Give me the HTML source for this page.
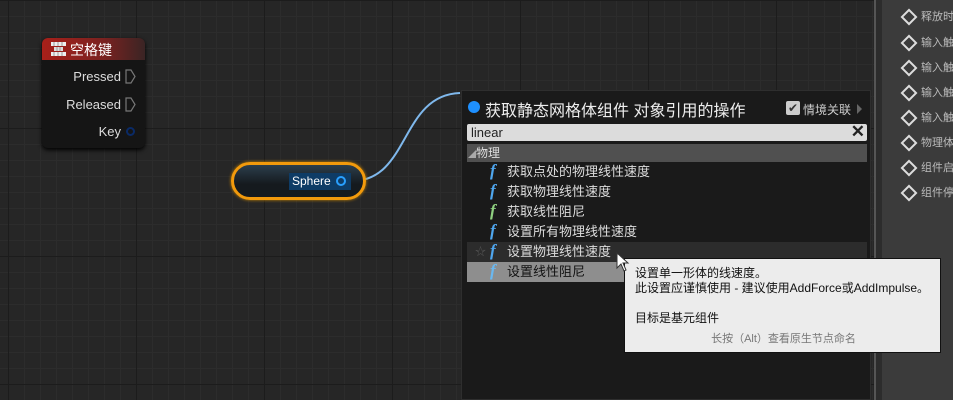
<!DOCTYPE html>
<html><head><meta charset="utf-8"><style>
*{margin:0;padding:0;box-sizing:border-box}
body{width:953px;height:400px;overflow:hidden;position:relative;background:#262626;font-family:"Liberation Sans","Noto Sans CJK SC",sans-serif;}
.grid{position:absolute;left:0;top:0;width:874px;height:400px;background-color:#262626;
background-image:linear-gradient(#1c1c1c 1px,transparent 1px),linear-gradient(90deg,#1c1c1c 1px,transparent 1px),linear-gradient(#2c2c2c 1px,transparent 1px),linear-gradient(90deg,#2c2c2c 1px,transparent 1px);
background-size:128px 128px,128px 128px,16px 16px,16px 16px;background-position:8px 0,8px 0,8px 0,8px 0}
.abs{position:absolute}
.node{left:42px;top:38px;width:103px;height:110px;background:#151515;border-radius:6px;box-shadow:0 2px 4px #000}
.nh{height:22px;border-radius:6px 6px 0 0;background:linear-gradient(90deg,#a8201a,#7a2220 60%,#3a2424);color:#fff;font-size:14px;padding:2px 0 0 28px;position:relative}
.pin{color:#ddd;font-size:13px;position:absolute;right:24px}
.tri{position:absolute;right:9px}
.menu{left:461px;top:90px;width:410px;height:310px;background:#1a1a1a;border:1px solid #2e2e2e}
.row{position:absolute;left:5px;width:400px;height:20px;color:#ddd;font-size:13px;padding-left:40px;line-height:20px}
.f{position:absolute;left:23px;font-family:"Liberation Serif",serif;font-style:italic;font-weight:bold;font-size:17px;color:#4fa6ee;top:-1px}
.right{left:882px;top:0;width:71px;height:400px;background:#3b3b3b}
.ri{position:absolute;left:20px;color:#bbb;font-size:11px;height:16px}
.ri:before{content:"";position:absolute;left:1px;top:3px;width:8px;height:8px;border:2px solid #ddd;transform:rotate(45deg)}
.ri span{position:absolute;left:19px;top:0;white-space:nowrap}
</style></head><body>
<div class="grid"></div>
<div class="abs" style="left:874px;top:0;width:2px;height:400px;background:#555"></div>
<div class="abs" style="left:876px;top:0;width:6px;height:400px;background:#2c2c2c"></div>
<div class="abs right">
<div class="ri" style="top:8px"><span>释放时</span></div>
<div class="ri" style="top:34px"><span>输入触</span></div>
<div class="ri" style="top:59px"><span>输入触</span></div>
<div class="ri" style="top:84px"><span>输入触</span></div>
<div class="ri" style="top:109px"><span>输入触</span></div>
<div class="ri" style="top:134px"><span>物理体</span></div>
<div class="ri" style="top:159px"><span>组件启</span></div>
<div class="ri" style="top:184px"><span>组件停</span></div>
</div>

<div class="abs node">
<div class="nh"><svg style="position:absolute;left:9px;top:4px" width="15" height="14"><rect x="0" y="0" width="15" height="4" fill="#eee"/><rect x="3" y="5" width="9" height="4" fill="#ddd"/><rect x="0" y="10" width="15" height="4" fill="#eee"/><path d="M3 0v4M7 0v4M11 0v4M6 5v4M9 5v4M3 10v4M7 10v4M11 10v4" stroke="#999" stroke-width="1"/></svg>空格键</div>
<div class="pin" style="top:31px">Pressed</div><svg class="tri" style="top:31px" width="11" height="15"><path d="M1 1H6L10 7.5L6 14H1Z" fill="none" stroke="#777" stroke-width="1.2"/></svg>
<div class="pin" style="top:59px">Released</div><svg class="tri" style="top:59px" width="11" height="15"><path d="M1 1H6L10 7.5L6 14H1Z" fill="none" stroke="#777" stroke-width="1.2"/></svg>
<div class="pin" style="top:86px">Key</div>
<div class="abs" style="right:10px;top:89px;width:9px;height:9px;border:2px solid #0a2a66;border-radius:50%"></div>
</div>

<svg class="abs" style="left:0;top:0" width="953" height="400"><path d="M352 181 C410 181 400 95 460 93" stroke="#7fb8ec" stroke-width="2" fill="none"/></svg>
<div class="abs" style="left:231px;top:162px;width:135px;height:38px;border:3px solid #f29a0c;border-radius:19px;background:linear-gradient(#2c3e4c,#151a1e 60%);box-shadow:0 0 3px #c80"></div>
<div class="abs" style="left:289px;top:173px;width:62px;height:17px;background:#0e3c66"></div>
<div class="abs" style="left:292px;top:174px;color:#fff;font-size:12px">Sphere</div>
<div class="abs" style="left:336px;top:176px;width:10px;height:10px;border:2px solid #29a0ff;border-radius:50%"></div>

<div class="abs menu">
<div class="abs" style="left:6px;top:10px;width:12px;height:12px;border-radius:50%;background:#1e90ff"></div>
<div class="abs" style="left:23px;top:6px;color:#eee;font-size:16px">获取静态网格体组件 对象引用的操作</div>
<div class="abs" style="left:324px;top:10px;width:14px;height:14px;background:#ccc;border-radius:2px;color:#333;font-size:12px;line-height:14px;text-align:center">✔</div>
<div class="abs" style="left:341px;top:10px;color:#ccc;font-size:12px">情境关联</div>
<div class="abs" style="left:395px;top:13px;width:0;height:0;border-left:5px solid #666;border-top:5px solid transparent;border-bottom:5px solid transparent"></div>
<div class="abs" style="left:5px;top:33px;width:400px;height:17px;background:#dcdcdc;border-radius:2px;color:#222;font-size:13px;padding-left:4px;line-height:17px">linear<span style="position:absolute;right:2px;top:-1px;font-size:17px;font-weight:bold">✕</span></div>
<div class="abs" style="left:5px;top:53px;width:400px;height:18px;background:#505050;color:#ddd;font-size:12px;line-height:18px;padding-left:1px"><span style="font-size:8px;color:#aaa">◢</span>物理</div>
<div class="row" style="top:71px"><span class="f">f</span>获取点处的物理线性速度</div>
<div class="row" style="top:91px"><span class="f">f</span>获取物理线性速度</div>
<div class="row" style="top:111px"><span class="f" style="color:#8fd080">f</span>获取线性阻尼</div>
<div class="row" style="top:131px"><span class="f">f</span>设置所有物理线性速度</div>
<div class="row" style="top:151px;background:#2c2c2c"><span style="position:absolute;left:8px;color:#555;font-size:11px">☆</span><span class="f">f</span>设置物理线性速度</div>
<div class="row" style="top:171px;width:157px;background:#8e8e8e;color:#111"><span class="f" style="color:#6ab8f0">f</span>设置线性阻尼</div>
</div>

<div class="abs" style="left:624px;top:258px;width:317px;height:95px;background:#ececec;border:1px solid #111;font-size:12px;color:#111;line-height:15px;padding:7px 0 0 10px">
设置单一形体的线速度。<br>此设置应谨慎使用 - 建议使用AddForce或AddImpulse。<br><br>目标是基元组件
<div style="position:absolute;left:0;width:317px;text-align:center;top:73px;color:#777;font-size:11px">长按（Alt）查看原生节点命名</div>
</div>
<svg class="abs" style="left:616px;top:252px" width="16" height="22"><path d="M1 1 L1 16 L5 12 L8 19 L10 18 L7 11 L12 11 Z" fill="#fff" stroke="#333" stroke-width="1"/></svg>
</body></html>
